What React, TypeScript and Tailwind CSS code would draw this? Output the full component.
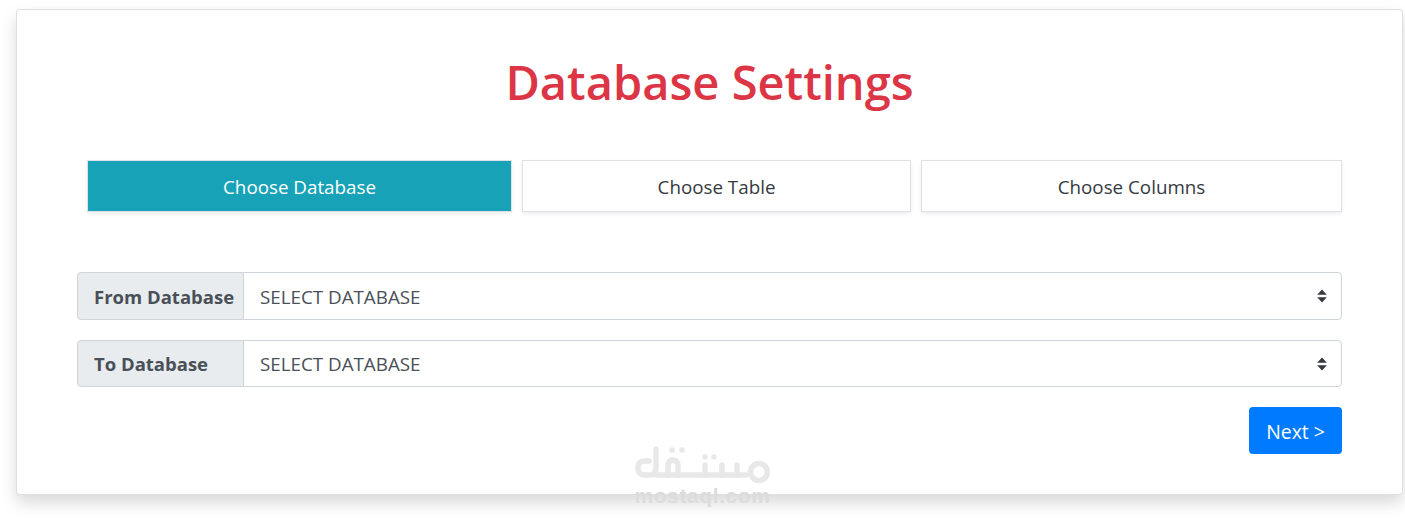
const TABS = [
  { label: "Choose Database", width: "w-[425px]", active: true },
  { label: "Choose Table", width: "w-[389px]", active: false },
  { label: "Choose Columns", width: "w-[421px]", active: false },
];

function SortIcon() {
  return (
    <svg width="10" height="14" viewBox="0 0 10 14" className="pointer-events-none absolute right-[15px] top-1/2 -translate-y-1/2">
      <path d="M5 0.5 L9.8 5.8 H0.2 Z M5 13.5 L0.2 8.2 H9.8 Z" fill="#343a40" />
    </svg>
  );
}

function DbSelect({ label, height, pad }: { label: string; height: string; pad: string }) {
  return (
    <div className={`flex ${height} w-full text-[#495057]`}>
      <label className={`flex w-[167px] shrink-0 items-center rounded-l-[4px] border border-[#ced4da] bg-[#e9ecef] pl-4 text-[18.5px] font-bold whitespace-nowrap ${pad}`}>
        {label}
      </label>
      <div className="relative -ml-px flex-1">
        <select className={`h-full w-full appearance-none rounded-r-[4px] border border-[#ced4da] bg-white pl-4 pr-8 text-[18.8px] text-[#495057] outline-none ${pad}`}>
          <option>SELECT DATABASE</option>
        </select>
        <SortIcon />
      </div>
    </div>
  );
}

function Watermark() {
  return (
    <div className="pointer-events-none absolute left-[634px] top-[446px] flex w-[137px] flex-col items-center">
      <svg width="137" height="40" viewBox="0 0 137 40" fill="none" stroke="#e8e8e8" strokeWidth="5.5" strokeLinecap="round" strokeLinejoin="round">
        <path d="M22 3 V22 Q22 29 15 29 H11 Q4 29 4 22 Q4 15 11 15 H15" />
        <path d="M22 29 H112" />
        <path d="M34 29 V21 Q34 14 39 14 Q44 14 44 21 V29" />
        <path d="M71 19 V29 M88 19 V29 M103 19 V29" />
        <circle cx="125" cy="26" r="8.5" />
        <circle cx="38" cy="4" r="2" fill="#e8e8e8" strokeWidth="1.5" />
        <circle cx="48" cy="4" r="2" fill="#e8e8e8" strokeWidth="1.5" />
        <circle cx="71" cy="11" r="2" fill="#e8e8e8" strokeWidth="1.5" />
        <circle cx="80" cy="11" r="2" fill="#e8e8e8" strokeWidth="1.5" />
      </svg>
      <div className="text-[21px] leading-[20px] font-bold tracking-[0.6px] whitespace-nowrap text-[#dcdcdc] [font-family:'Liberation_Sans',sans-serif]">
        mostaql.com
      </div>
    </div>
  );
}

export default function App() {
  return (
    <div className="relative h-[518px] w-full overflow-hidden bg-white pl-[16px] pt-[9px] [font-family:'Open_Sans',sans-serif]">
      <div className="h-[486px] w-[1387px] rounded-[4px] border border-[rgba(0,0,0,0.125)] bg-white px-[60px] shadow-[0_8px_16px_rgba(0,0,0,0.15)]">
        <h1 className="mt-[37px] h-[70px] text-center text-[47px] leading-[70px] font-semibold text-[#dc3545]">
          Database Settings
        </h1>

        <div className="mt-[43px] flex gap-[10px] pl-[10px]">
          {TABS.map((t) => (
            <div
              key={t.label}
              className={`flex h-[52px] ${t.width} items-center justify-center border border-[#dee2e6] pt-[2px] text-[18.8px] shadow-[0_2px_4px_rgba(0,0,0,0.075)] ${
                t.active ? "bg-[#17a2b8] text-white" : "bg-white text-[#343a40]"
              }`}
            >
              {t.label}
            </div>
          ))}
        </div>

        <div className="mt-[60px] flex flex-col gap-[20px]">
          <DbSelect label="From Database" height="h-[48px]" pad="pt-[2px]" />
          <DbSelect label="To Database" height="h-[47px]" pad="pt-px" />
        </div>

        <div className="mt-[20px] flex justify-end">
          <button type="button" className="h-[47px] w-[93px] rounded-[4px] bg-[#007bff] pt-[2px] text-[19.4px] text-white">
            Next &gt;
          </button>
        </div>
      </div>
      <Watermark />
    </div>
  );
}
